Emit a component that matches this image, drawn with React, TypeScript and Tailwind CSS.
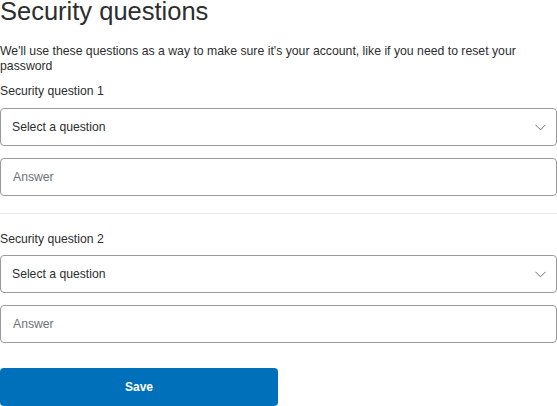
import React from "react";

function SelectBox() {
  return (
    <div className="flex h-[38px] w-full items-center justify-between rounded-[4px] border border-[#9a9a9a] bg-white pl-[11px] pr-[10px]">
      <span className="text-[12.2px] text-[#2c2e2f]">Select a question</span>
      <svg width="11" height="7" viewBox="0 0 11 7" fill="none">
        <path d="M0.5 0.8 L5.5 5.8 L10.5 0.8" stroke="#6c7378" strokeWidth="1" />
      </svg>
    </div>
  );
}

function AnswerBox() {
  return (
    <div className="flex h-[38px] w-full items-center rounded-[4px] border border-[#9a9a9a] bg-white pl-[12px]">
      <span className="text-[12.2px] text-[#6c7378]">Answer</span>
    </div>
  );
}

export default function App() {
  return (
    <div className="h-[406px] w-[557px] overflow-hidden bg-white font-['Liberation_Sans',Arial,sans-serif] text-[#2c2e2f]">
      <h1 className="text-[25.5px] leading-[22px] font-normal text-[#2c2e2f]">Security questions</h1>
      <p className="mt-[22px] text-[12.25px] leading-[15px] text-[#2c2e2f]">
        We'll use these questions as a way to make sure it's your account, like if you need to reset your password
      </p>
      <div className="mt-[10px] text-[12.2px] leading-[15px]">Security question 1</div>
      <div className="mt-[9px]">
        <SelectBox />
      </div>
      <div className="mt-[12px]">
        <AnswerBox />
      </div>
      <div className="mt-[17px] h-px w-full bg-[#eaeced]" />
      <div className="mt-[18px] text-[12.2px] leading-[15px]">Security question 2</div>
      <div className="mt-[8px]">
        <SelectBox />
      </div>
      <div className="mt-[12px]">
        <AnswerBox />
      </div>
      <button className="mt-[25px] flex h-[38px] w-[278px] items-center justify-center rounded-[4px] bg-[#0070ba] text-[12px] font-bold text-white">
        Save
      </button>
    </div>
  );
}
